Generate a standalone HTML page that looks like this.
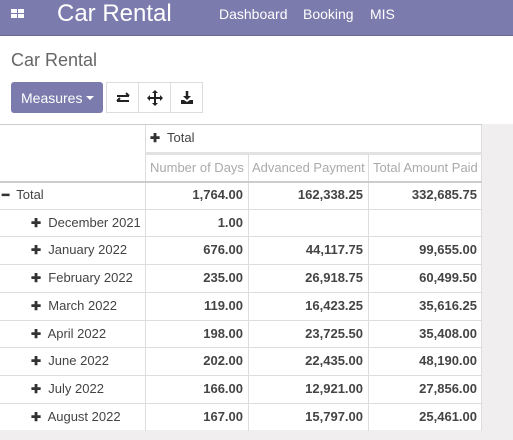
<!DOCTYPE html>
<html><head><meta charset="utf-8"><style>
*{margin:0;padding:0;box-sizing:border-box}
body{width:513px;height:440px;overflow:hidden;background:#fff;font-family:"Liberation Sans",Arial,sans-serif;position:relative}
.nav{position:absolute;left:0;top:0;width:513px;height:36px;background:#7c7bad;border-bottom:1px solid #6a6996;color:#fff}
.nav .t{position:absolute;left:57px;top:0px;font-size:24px}
.nav .m{position:absolute;top:6px;font-size:14px}
.grid{position:absolute;left:11px;top:9px;width:14px;height:10px}
.grid i{position:absolute;width:6px;height:4px;background:#fff}
.title{position:absolute;left:11px;top:50px;font-size:18px;color:#666}
.meas{position:absolute;left:11px;top:82px;width:92px;height:31px;background:#7c7bad;border-radius:3px;color:#fff;font-size:14px;padding:8px 0 0 10px}
.meas:after{content:"";position:absolute;left:75px;top:14px;border-left:4px solid transparent;border-right:4px solid transparent;border-top:4px solid #fff}
.btn{position:absolute;top:82px;width:33px;height:31px;border:1px solid #ddd;background:#fff}
.gray{position:absolute;left:0;top:124px;width:513px;height:316px;background:#f0eeee}
.tbl{position:absolute;left:0;top:124px;width:482px;height:306px;background:#fff;border-top:1px solid #ccc}
.c{position:absolute;font-size:13px;color:#444;white-space:nowrap}
.vl{position:absolute;width:1px;background:#ddd}
.hl{position:absolute;height:1px;background:#ddd}
.b{font-weight:bold;text-align:right}
.h{color:#aaa;font-size:13px}
.plus{font-weight:bold;color:#333;font-size:12px}
</style></head><body>
<div class="nav">
<div class="grid"><i style="left:0;top:0"></i><i style="left:7px;top:0"></i><i style="left:0;top:5px"></i><i style="left:7px;top:5px"></i></div>
<div class="t">Car Rental</div>
<div class="m" style="left:219px">Dashboard</div>
<div class="m" style="left:303px">Booking</div>
<div class="m" style="left:370px">MIS</div>
</div>
<div class="title">Car Rental</div>
<div class="meas">Measures</div>
<div class="btn" style="left:106px"><svg width="33" height="31"><path d="M10 13h12M19 10l3 3M10 18h12M13 15l-3 3" stroke="#222" stroke-width="2" fill="none"/></svg></div>
<div class="btn" style="left:138px"><svg width="33" height="31"><path d="M16 8v14M9 15h14" stroke="#222" stroke-width="2"/><path d="M16 7l-3 3h6zM16 23l-3-3h6zM8 15l3-3v6zM24 15l-3-3v6z" fill="#222"/></svg></div>
<div class="btn" style="left:170px"><svg width="33" height="31"><path d="M16 8v7" stroke="#222" stroke-width="2.5"/><path d="M12 13h8l-4 4z" fill="#222"/><path d="M10 17h3l3 2 3-2h3v4H10z" fill="#222"/></svg></div>
<div class="gray"></div>
<div class="tbl">
<div class="vl" style="left:145px;top:0;height:306px"></div>
<div class="vl" style="left:248px;top:28px;height:278px"></div>
<div class="vl" style="left:368px;top:28px;height:278px"></div>
<div class="vl" style="left:481px;top:0;height:306px"></div>
<div class="hl" style="left:145px;top:27px;width:337px;height:3px;background:#e2e2e2"></div>
<div class="hl" style="left:0;top:56px;width:482px;height:2px;background:#ccc"></div>
<div class="c" style="left:150px;top:5px"><span class="plus">✚</span>&nbsp; Total</div>
<div class="c h" style="left:150px;top:35px">Number of Days</div>
<div class="c h" style="left:252px;top:35px">Advanced Payment</div>
<div class="c h" style="left:373px;top:35px">Total Amount Paid</div>
</div>
<div id="rows"></div>
<script>
var d=[["Total","1,764.00","162,338.25","332,685.75",1],["December 2021","1.00","",""],["January 2022","676.00","44,117.75","99,655.00"],["February 2022","235.00","26,918.75","60,499.50"],["March 2022","119.00","16,423.25","35,616.25"],["April 2022","198.00","23,725.50","35,408.00"],["June 2022","202.00","22,435.00","48,190.00"],["July 2022","166.00","12,921.00","27,856.00"],["August 2022","167.00","15,797.00","25,461.00"]];
var h="";d.forEach(function(r,i){var y=181+i*27.7;
if(i>0)h+='<div class="hl" style="left:0;top:'+Math.round(y)+'px;width:482px"></div>';
var ty=Math.round(y+6);
h+=r[4]?'<div class="c" style="left:2px;top:'+ty+'px"><span class="plus">━</span>&nbsp; Total</div>':'<div class="c" style="left:31px;top:'+ty+'px"><span class="plus">✚</span>&nbsp; '+r[0]+'</div>';
h+='<div class="c b" style="right:270px;top:'+ty+'px">'+r[1]+'</div><div class="c b" style="right:150px;top:'+ty+'px">'+r[2]+'</div><div class="c b" style="right:36px;top:'+ty+'px">'+r[3]+'</div>';});
document.getElementById("rows").innerHTML=h;
</script>
</body></html>
